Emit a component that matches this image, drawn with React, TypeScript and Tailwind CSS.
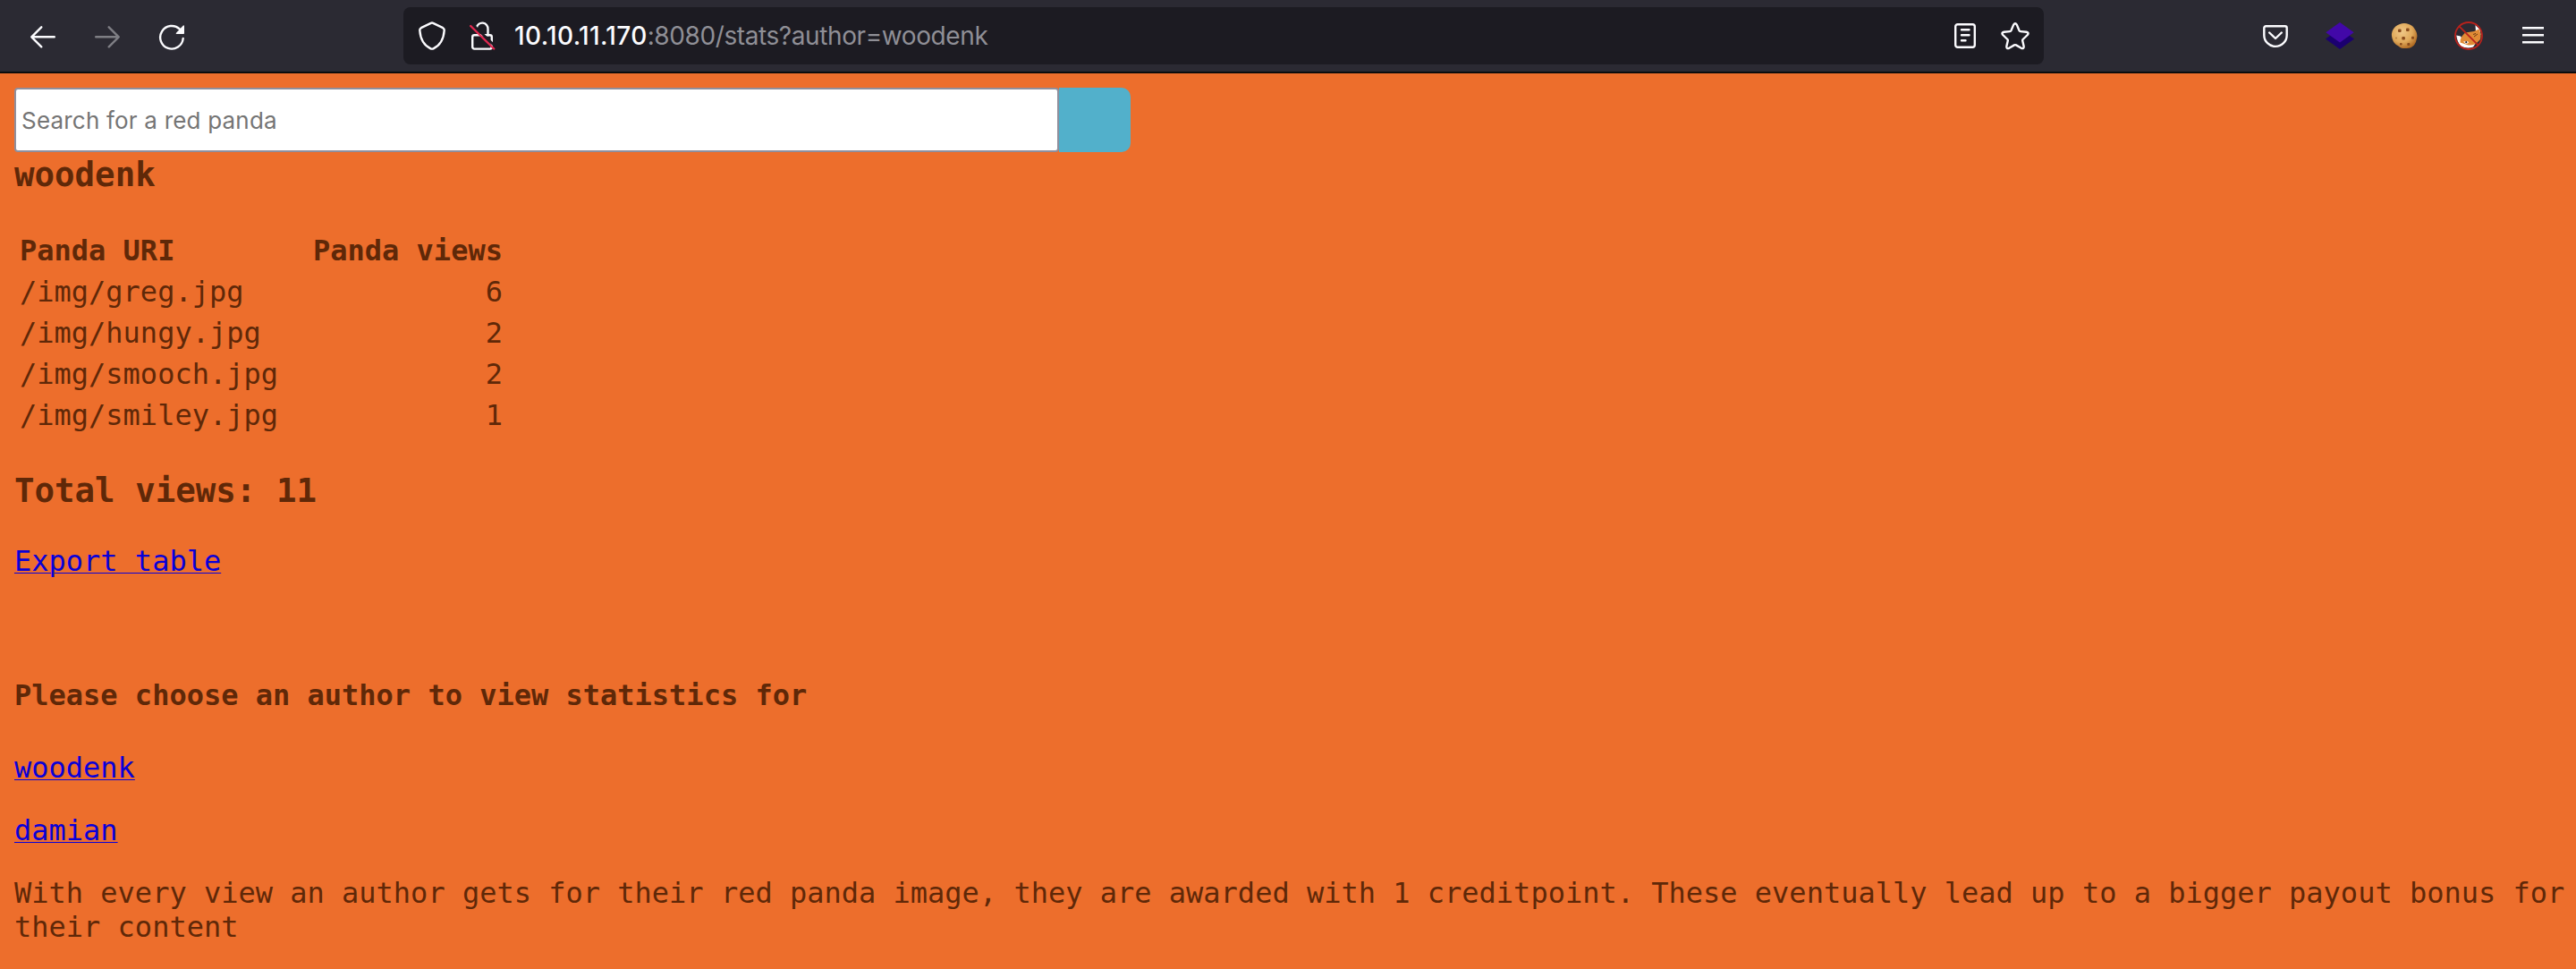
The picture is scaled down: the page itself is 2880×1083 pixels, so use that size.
import React from "react";

const rows: [string, number][] = [
  ["/img/greg.jpg", 6],
  ["/img/hungy.jpg", 2],
  ["/img/smooch.jpg", 2],
  ["/img/smiley.jpg", 1],
];

const stroke = {
  fill: "none",
  stroke: "#fbfbfe",
  strokeWidth: 2.4,
  strokeLinecap: "round" as const,
  strokeLinejoin: "round" as const,
};

function Icon({ children, className = "" }: { children: React.ReactNode; className?: string }) {
  return (
    <svg viewBox="0 0 32 32" className={"block h-8 w-8 shrink-0 " + className}>
      {children}
    </svg>
  );
}

function Toolbar() {
  return (
    <header className="flex h-[82px] items-center border-b-2 border-[#0c0c0d] bg-[#2b2a33]">
      <div className="flex w-[451px] gap-10 pl-8">
        <Icon>
          <path {...stroke} d="M28.800 17.300H3.300M14.300 6.300L3.300 17.300L14.300 28.300" />
        </Icon>
        <Icon className="opacity-40">
          <path {...stroke} d="M3.200 17.300H28.700M17.700 6.300L28.700 17.300L17.700 28.300" />
        </Icon>
        <Icon>
          <path {...stroke} d="M28.700 19A12.800 12.800 0 1 1 25 8.700" />
          <path fill="#fbfbfe" d="M28.600 4.700Q30 3.600 30 5.300V13.200Q30 14 29.200 14H21.400Q20 14 21 12.800z" />
        </Icon>
      </div>
      <div className="flex h-16 w-[1834px] items-center rounded-lg bg-[#1c1b22] px-4">
        <Icon>
          <path
            {...stroke}
            d="M14.700 1.800Q16 1.200 17.300 1.800L28.200 7.200Q29.900 8.200 29.700 10C29 20 24.500 27 17.500 30.300Q16 31 14.500 30.300C7.500 27 3 20 2.300 10Q2.100 8.200 3.800 7.200Z"
          />
        </Icon>
        <Icon className="ml-6">
          <path {...stroke} d="M9.800 7A6.400 6.400 0 0 1 22.500 8.500V15.300" />
          <rect {...stroke} x="5.200" y="15.300" width="21.600" height="15.300" rx="2" />
          <path stroke="#1c1b22" strokeWidth="3" d="M4.500 2.500L31.500 28.500" />
          <path stroke="#e22850" strokeWidth="2.400" strokeLinecap="round" d="M3.200 5L29.200 30.500" />
        </Icon>
        <div className="ml-5 grow whitespace-pre font-[Inter] text-[28px] leading-8 tracking-[-0.4px] text-[#8f8f96]">
          <span className="font-medium tracking-[0.35px] text-[#fbfbfe]">10.10.11.170</span>
          :8080/stats?author=woodenk
        </div>
        <Icon>
          <rect {...stroke} x="5.200" y="3.200" width="21.600" height="25.600" rx="2.500" />
          <path {...stroke} d="M12 9.200h8.500M12 15.200h8.500M12 21.200h4.500" />
        </Icon>
        <Icon className="ml-6">
          <path
            {...stroke}
            d="M14.200 3.600Q16 .8 17.800 3.600L20.600 10.200Q21 11 22 11.100L28.600 11.800Q31.800 12.300 29.800 15L24.600 20Q24 20.700 24.200 21.600L25.600 27.600Q26 31 22.800 29.800L17 26.400Q16 25.900 15 26.400L9.200 29.800Q6 31 6.400 27.600L7.800 21.600Q8 20.700 7.400 20L2.200 15Q.2 12.300 3.400 11.800L10 11.100Q11 11 11.400 10.200Z"
          />
        </Icon>
      </div>
      <div className="flex grow justify-end gap-10 pr-8">
        <Icon>
          <path
            {...stroke}
            d="M5.300 5.300h21.400a2 2 0 0 1 2 2V15.200a12.700 12.700 0 0 1-25.400 0V7.300a2 2 0 0 1 2-2zM9.200 12.500L16 19l6.800-6.500"
          />
        </Icon>
        <Icon>
          <path fill="#1b0070" d="M0 19.500L16 8l16 11.500L16 31z" />
          <path fill="#4208a8" d="M.3 12.300L16 1l15.700 11.300L16 23.600z" />
        </Icon>
        <Icon>
          <defs>
            <radialGradient id="cookie" cx="0.4" cy="0.35" r="0.68">
              <stop offset="0" stopColor="#efc787" />
              <stop offset="0.6" stopColor="#e0a95a" />
              <stop offset="1" stopColor="#b06a22" />
            </radialGradient>
          </defs>
          <path
            fill="url(#cookie)"
            d="M11 3Q16 1 21 3Q26 4.500 28 9Q31 13 30.200 18Q29.500 23 27 26.500Q23 30.500 18 30Q12 30.500 9.500 27.500Q4 25 2.500 19Q1 13 3.500 9Q6 4.500 11 3z"
          />
          <g fill="#8a4b1c">
            <rect x="9" y="8.500" width="3.600" height="3.400" rx="1" />
            <rect x="18" y="7.600" width="3.600" height="3.400" rx="1" />
            <rect x="13.300" y="17" width="3.600" height="3.400" rx="1" />
            <rect x="24" y="16.800" width="3" height="3" rx="1" />
            <rect x="11" y="24" width="2.600" height="2.600" rx="1" />
            <rect x="19.300" y="24" width="3" height="3" rx="1" />
            <rect x="6" y="17.500" width="2" height="2" rx="1" opacity="0.5" />
          </g>
        </Icon>
        <Icon>
          <path fill="#fff" d="M2.300 15.500L7 16.500L10 22L24 24L21 28.500Q14 31 7 27.500Q3 22 2.300 15.500z" />
          <path fill="#fff" d="M23.500 4L28.500 9L29.500 15L24 12z" />
          <path fill="#e08a35" d="M12 12.500L22 11L27.500 8.500Q30.500 14 29 20L24 25Q18 27.500 14 26L6.500 23.500Q6.500 19 8.500 16.500z" />
          <path stroke="#6b3a12" strokeWidth="1" d="M22 17l4-3M21 14.500l3-1" />
          <path fill="#fff" d="M10 22.500l5-.5 1 2-3 1z" />
          <circle cx="13.300" cy="23.200" r="1.100" fill="#26222c" />
          <circle cx="16" cy="16" r="15" fill="none" stroke="#b8221c" strokeWidth="1.800" />
          <path stroke="#b8221c" strokeWidth="1.800" d="M5.200 5.200L27 26.800" />
        </Icon>
        <Icon>
          <path {...stroke} strokeLinecap="butt" d="M4 7.200h24M4 15.200h24M4 23.200h24" />
        </Icon>
      </div>
    </header>
  );
}

const link = "text-[#0a00d8] underline decoration-1 underline-offset-2";

export default function App() {
  return (
    <div className="h-[1083px] overflow-hidden bg-[#ed6e2c] font-['DejaVu_Sans_Mono',monospace] text-[32px] leading-[38px] text-[#5f2808]">
      <Toolbar />
      <main className="pl-4 pr-2 pt-4">
        <div className="flex h-[72px]">
          <input
            className="w-[1168px] rounded-[4px] border-2 border-[#8f8f9d] bg-white px-[6px] pt-0.5 font-[Inter] text-[26px] tracking-[0.2px] placeholder:text-[#757575]"
            placeholder="Search for a red panda"
          />
          <button className="w-20 rounded-r-[10px] bg-[#52b0cb]" aria-label="Search" />
        </div>
        <h3 className="mt-[3px] text-[37.440px] font-bold leading-[44px]">woodenk</h3>
        <table className="mt-[38px] border-separate border-spacing-1">
          <thead>
            <tr>
              <th className="w-[324px] p-[2px] text-left">Panda URI</th>
              <th className="p-[2px] text-right">Panda views</th>
            </tr>
          </thead>
          <tbody>
            {rows.map(([uri, views]) => (
              <tr key={uri}>
                <td className="p-[2px]">{uri}</td>
                <td className="p-[2px] text-right">{views}</td>
              </tr>
            ))}
          </tbody>
        </table>
        <h3 className="mt-[37px] text-[37.440px] font-bold leading-[44px]">Total views: 11</h3>
        <p className="mt-[38px]"><a className={link}>Export table</a></p>
        <h4 className="mt-[112px] font-bold">Please choose an author to view statistics for</h4>
        <p className="mt-[43px]"><a className={link}>woodenk</a></p>
        <p className="mt-8"><a className={link}>damian</a></p>
        <p className="mt-8">
          With every view an author gets for their red panda image, they are awarded with 1 creditpoint. These
          eventually lead up to a bigger payout bonus for their content
        </p>
      </main>
    </div>
  );
}
